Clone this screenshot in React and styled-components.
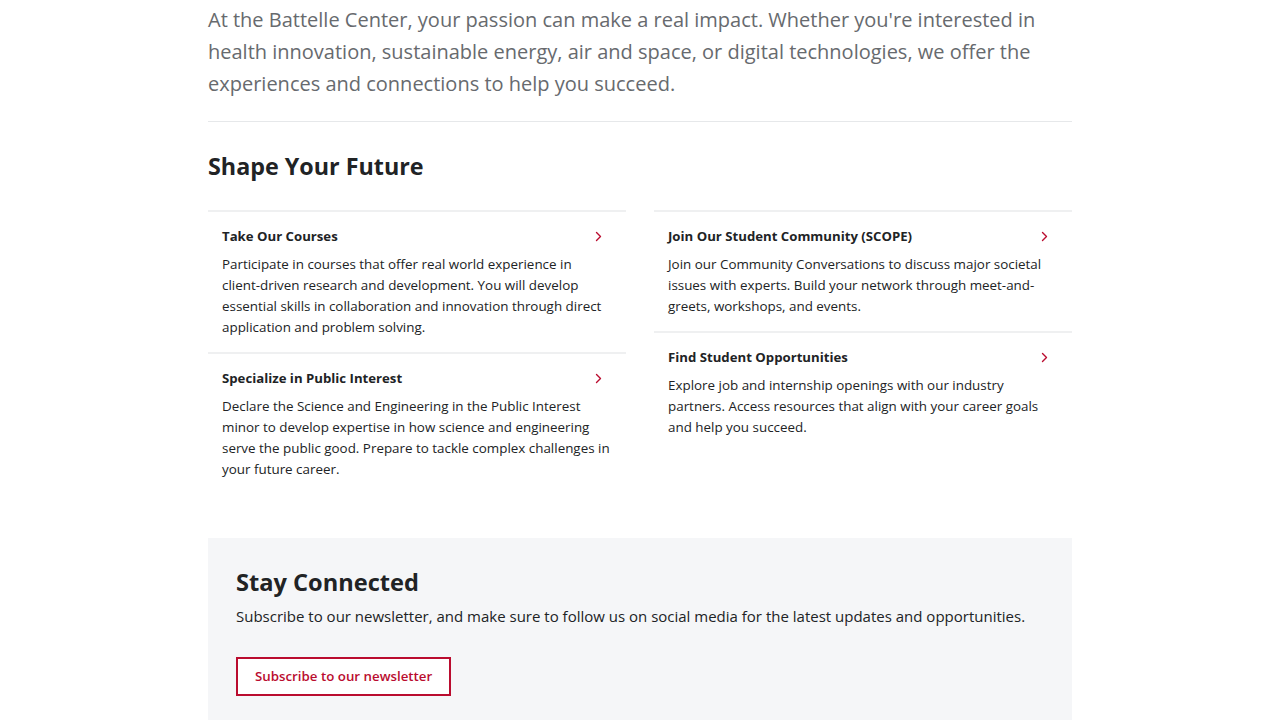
import styled, { createGlobalStyle } from "styled-components";

const GlobalStyle = createGlobalStyle`
  body {
    margin: 0;
    background: #ffffff;
    font-family: 'Open Sans', 'Noto Sans', sans-serif;
    color: #212325;
  }
`

const cards = {
  left: [
    {
      title: "Take Our Courses",
      text: "Participate in courses that offer real world experience in client-driven research and development. You will develop essential skills in collaboration and innovation through direct application and problem solving.",
    },
    {
      title: "Specialize in Public Interest",
      text: "Declare the Science and Engineering in the Public Interest minor to develop expertise in how science and engineering serve the public good. Prepare to tackle complex challenges in your future career.",
    },
  ],
  right: [
    {
      title: "Join Our Student Community (SCOPE)",
      text: "Join our Community Conversations to discuss major societal issues with experts. Build your network through meet-and-greets, workshops, and events.",
    },
    {
      title: "Find Student Opportunities",
      text: "Explore job and internship openings with our industry partners. Access resources that align with your career goals and help you succeed.",
    },
  ],
};

const Chevron = () => (
  <svg width="7" height="11" viewBox="0 0 7 11" fill="none">
    <path d="M1.5 1.5 L5.5 5.5 L1.5 9.5" stroke="#ba0c2f" strokeWidth="1.4" strokeLinecap="round" strokeLinejoin="round" />
  </svg>
);

const Card = ({ title, text }) => (
  <CardBox href="#">
    <CardHead>
      <CardTitle>{title}</CardTitle>
      <Chevron />
    </CardHead>
    <CardText>{text}</CardText>
  </CardBox>
);

const App = () => {
  return (
    <>
      <GlobalStyle />
      <Page>
        <Intro>
          At the Battelle Center, your passion can make a real impact. Whether you're interested in
          health innovation, sustainable energy, air and space, or digital technologies, we offer the
          experiences and connections to help you succeed.
        </Intro>
        <Divider />
        <Heading>Shape Your Future</Heading>
        <CardGrid>
          <Column>
            {cards.left.map((c) => (
              <Card key={c.title} {...c} />
            ))}
          </Column>
          <Column>
            {cards.right.map((c) => (
              <Card key={c.title} {...c} />
            ))}
          </Column>
        </CardGrid>
        <Connect>
          <ConnectHeading>Stay Connected</ConnectHeading>
          <ConnectText>
            Subscribe to our newsletter, and make sure to follow us on social media for the latest updates and opportunities.
          </ConnectText>
          <OutlineButton href="#">Subscribe to our newsletter</OutlineButton>
        </Connect>
      </Page>
    </>
  )
}

const Page = styled.div`
  width: 864px;
  margin: 0 auto;
  padding-top: 4px;
`

const Intro = styled.p`
  margin: 0;
  font-size: 20px;
  line-height: 32px;
  color: #676a6e;
`

const Divider = styled.div`
  margin-top: 21px;
  border-bottom: 1px solid #e6e8ea;
`

const Heading = styled.h2`
  margin: 28px 0 28px;
  font-size: 23.3px;
  line-height: 32px;
  font-weight: 700;
  color: #212325;
`

const CardGrid = styled.div`
  display: grid;
  grid-template-columns: 1fr 1fr;
  column-gap: 28px;
  align-items: start;
`

const Column = styled.div`
  display: flex;
  flex-direction: column;
`

const CardBox = styled.a`
  display: block;
  border-top: 2px solid #eff0f1;
  padding: 14px 14px 14px;
  text-decoration: none;
  color: inherit;
`

const CardHead = styled.div`
  display: flex;
  align-items: center;
  justify-content: space-between;
  padding-right: 10px;
  margin-bottom: 8px;
`

const CardTitle = styled.div`
  font-size: 13.2px;
  line-height: 20px;
  font-weight: 700;
  color: #212325;
`

const CardText = styled.p`
  margin: 0;
  font-size: 13.4px;
  line-height: 21px;
  color: #212325;
`

const Connect = styled.div`
  margin-top: 44px;
  background: #f5f6f8;
  padding: 28px 28px 40px;
`

const ConnectHeading = styled.h2`
  margin: 0 0 6px;
  font-size: 23.6px;
  line-height: 32px;
  font-weight: 700;
  color: #212325;
`

const ConnectText = styled.p`
  margin: 0 0 29px;
  font-size: 15px;
  line-height: 24px;
  color: #212325;
`

const OutlineButton = styled.a`
  display: inline-block;
  padding: 8px 17px 8px;
  border: 2px solid #ba0c2f;
  background: #ffffff;
  color: #ba0c2f;
  font-size: 13.3px;
  font-weight: 600;
  line-height: 19px;
  text-decoration: none;
`

export default App;
